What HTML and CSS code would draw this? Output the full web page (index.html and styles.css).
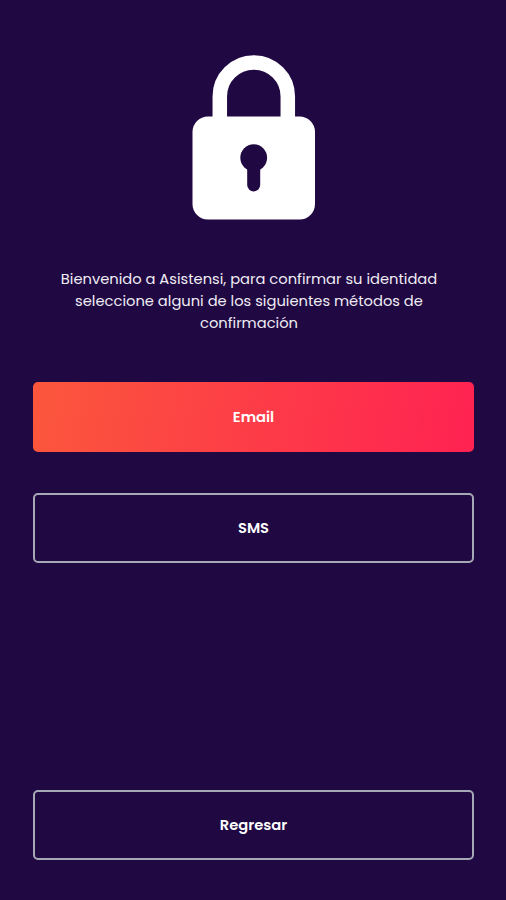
FILE: index.html
```html
<!DOCTYPE html>
<html lang="es">
<head>
<meta charset="utf-8">
<title>Asistensi</title>
<link rel="stylesheet" href="styles.css">
</head>
<body>
<main class="screen">
  <svg class="lock" viewBox="0 0 124 165" aria-hidden="true">
    <path d="M28 66V41.500a34 34 0 0 1 68 0V66" transform="translate(-.2 0)" fill="none" stroke="#fff" stroke-width="14.500"/>
    <rect x=".5" y="61.500" width="122.500" height="103" rx="15.500" fill="#fff"/>
    <circle cx="61.700" cy="102.700" r="13.400" fill="#200843"/>
    <path d="M61.700 104v26" stroke="#200843" stroke-width="13" stroke-linecap="round"/>
  </svg>
  <p class="message">
    <span class="line">Bienvenido a Asistensi, para confirmar su identidad</span>
    <span class="line">seleccione alguni de los siguientes métodos de</span>
    <span class="line">confirmación</span>
  </p>
  <button class="button primary">Email</button>
  <button class="button">SMS</button>
  <button class="button back">Regresar</button>
</main>
</body>
</html>
```
FILE: styles.css
```css
* { box-sizing: border-box; }
body { margin: 0; background: #200843; }
.screen {
  display: flex;
  flex-direction: column;
  align-items: center;
  height: 900px;
  padding: 55px 32px 40px 33px;
  color: #fff;
  font-family: Poppins, Inter, sans-serif;
}
.lock { width: 124px; height: 165px; flex: none; }
.message {
  margin: 48px 9px 48.4px 0;
  color: #efecf2;
  font-size: 14.7px;
  line-height: 22px;
  text-align: center;
}
.line { display: block; white-space: nowrap; }
.button {
  width: 100%;
  height: 70px;
  flex: none;
  padding: 1px 0 0;
  border: 2px solid #a5a8b5;
  border-radius: 5px;
  background: none;
  color: #fff;
  font: 600 14.7px Poppins, Inter, sans-serif;
}
.primary {
  margin-bottom: 40.4px;
  border: 0;
  background: linear-gradient(100deg, #fb573c, #ff2252);
}
.back { margin-top: auto; }
```
